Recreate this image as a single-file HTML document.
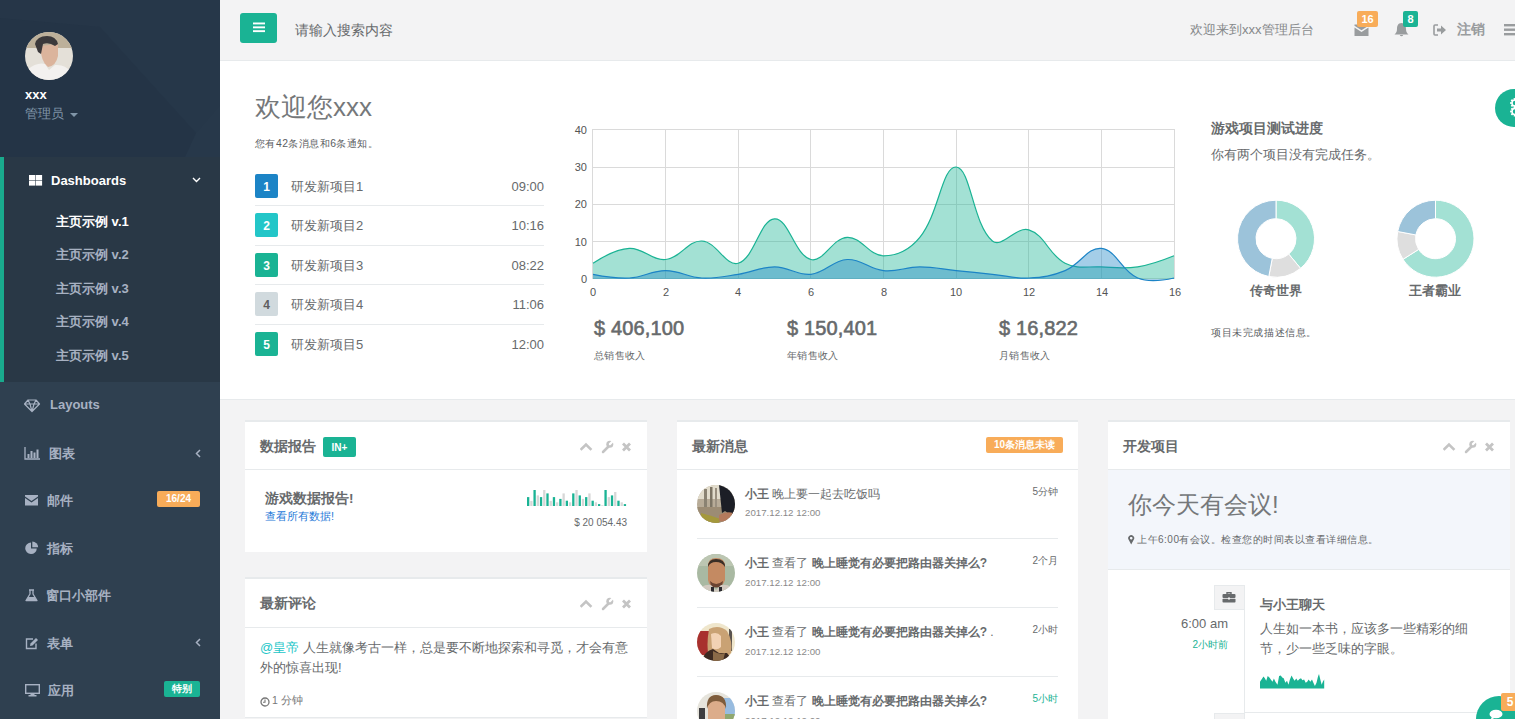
<!DOCTYPE html>
<html><head><meta charset="utf-8">
<style>
*{margin:0;padding:0;box-sizing:border-box}
html,body{width:1515px;height:719px;overflow:hidden}
body{position:relative;font-family:"Liberation Sans",sans-serif;font-size:13px;color:#676a6c;background:#f3f3f4}
.a{position:absolute;white-space:nowrap}
/* sidebar */
#side{position:absolute;left:0;top:0;width:220px;height:719px;background:#2f4050}
#prof{position:absolute;left:0;top:0;width:220px;height:157px;background:#263444;overflow:hidden}
#active{position:absolute;left:0;top:157px;width:220px;height:225px;background:#293846;border-left:4px solid #19aa8d}
.nav{color:#a7b1c2;font-weight:bold;font-size:13px}
.sub{color:#a7b1c2;font-weight:bold;font-size:13px}
/* top */
#top{position:absolute;left:220px;top:0;width:1295px;height:61px;background:#f3f3f4;border-bottom:1px solid #e7eaec}
#hdr{position:absolute;left:220px;top:61px;width:1295px;height:339px;background:#fff;border-bottom:1px solid #e7eaec}
.ibox{position:absolute;background:#fff;border-top:2px solid #e7eaec}
.ititle{position:absolute;left:0;top:0;right:0;height:48px;border-bottom:1px solid #e7eaec}
.ttl{font-size:14px;font-weight:bold;color:#676a6c}
.lbl{position:absolute;color:#fff;font-weight:bold;font-size:10px;border-radius:2px;text-align:center}
</style></head><body>
<div id="side">
  <div id="prof">
    <svg width="220" height="157" style="position:absolute;left:0;top:0">
      <rect width="220" height="157" fill="#243446"/>
      <polygon points="0,0 100,0 100,27 0,18" fill="#263648"/>
      <polygon points="100,0 220,0 220,133 196,133 100,27" fill="#263749"/>
      <polygon points="196,133 220,105 220,157 185,157" fill="#27384a"/>
    </svg>
    <svg class="a" style="left:25px;top:32px" width="48" height="48" viewBox="0 0 48 48">
      <defs><clipPath id="av"><circle cx="24" cy="24" r="24"/></clipPath></defs>
      <g clip-path="url(#av)">
        <rect width="48" height="48" fill="#e4e0d8"/>
        <rect width="48" height="16" fill="#bcb09a"/>
        <path d="M15,14 Q16,30 23,35 Q31,34 33,24 L33,12 Z" fill="#dbb49c"/>
        <path d="M10,12 Q12,4 22,4 Q31,4 33,12 L30,14 Q24,10 18,12 L16,22 L13,20 Z" fill="#3b393b"/>
        <path d="M0,48 L2,38 Q12,30 20,32 L24,38 L30,33 Q40,32 46,40 L48,48 Z" fill="#f3f1ef"/>
      </g>
    </svg>
    <div class="a" style="left:25px;top:87px;color:#fff;font-weight:bold;font-size:13px">xxx</div>
    <div class="a" style="left:25px;top:105px;color:#8095a8;font-size:13px">管理员 <span style="display:inline-block;width:0;height:0;border-left:4px solid transparent;border-right:4px solid transparent;border-top:4px solid #8095a8;vertical-align:middle;margin-left:2px"></span></div>
  </div>
  <div id="active"></div>
  <!-- dashboards -->
  <svg class="a" style="left:28.5px;top:174.5px" width="14" height="11"><rect x="0" y="0" width="6.3" height="5.1" fill="#fff"/><rect x="6.8" y="0" width="6.3" height="5.1" fill="#fff"/><rect x="0" y="5.6" width="6.3" height="5" fill="#fff"/><rect x="6.8" y="5.6" width="6.3" height="5" fill="#fff"/></svg>
  <div class="a nav" style="left:51px;top:173px;color:#fff">Dashboards</div>
  <svg class="a" style="left:192px;top:177px" width="9" height="6"><path d="M1,1 L4.5,4.5 L8,1" stroke="#fff" stroke-width="1.4" fill="none"/></svg>
  <div class="a sub" style="left:56px;top:213px;color:#fff">主页示例 v.1</div>
  <div class="a sub" style="left:56px;top:246px">主页示例 v.2</div>
  <div class="a sub" style="left:56px;top:280px">主页示例 v.3</div>
  <div class="a sub" style="left:56px;top:313px">主页示例 v.4</div>
  <div class="a sub" style="left:56px;top:347px">主页示例 v.5</div>
  <!-- other items -->

  <svg class="a" style="left:24px;top:399px" width="17" height="14"><path d="M4,1 H12 L15.5,5 L8,12.5 L0.5,5 Z M0.5,5 H15.5 M4,1 L6,5 L8,12.5 L10,5 L12,1" stroke="#a7b1c2" stroke-width="1.2" fill="none" stroke-linejoin="round"/></svg>
  <svg class="a" style="left:24px;top:447px" width="17" height="13"><path d="M1,0 V12 H16" stroke="#a7b1c2" stroke-width="1.3" fill="none"/><rect x="3.5" y="7" width="2" height="4" fill="#a7b1c2"/><rect x="6.5" y="4" width="2" height="7" fill="#a7b1c2"/><rect x="9.5" y="5.5" width="2" height="5.5" fill="#a7b1c2"/><rect x="12.5" y="2.5" width="2" height="8.5" fill="#a7b1c2"/></svg>
  <svg class="a" style="left:24px;top:494px" width="15" height="12"><path d="M1,1 H14 V2.5 L7.5,7 L1,2.5 Z" fill="#a7b1c2"/><path d="M1,4 L7.5,8.5 L14,4 V11.5 H1 Z" fill="#a7b1c2"/></svg>
  <svg class="a" style="left:25px;top:541px" width="14" height="14"><path d="M6,1.5 A5.8,5.8 0 1 0 11.8,7.5 H6 Z" fill="#a7b1c2"/><path d="M7.3,0.5 A6,6 0 0 1 13.2,6.3 H7.3 Z" fill="#a7b1c2"/></svg>
  <svg class="a" style="left:25px;top:589px" width="13" height="13"><path d="M4,1 H9 M5,1 V5 L1,11.5 H12 L8,5 V1" stroke="#a7b1c2" stroke-width="1.3" fill="none" stroke-linejoin="round"/><path d="M3.2,8 H9.8 L11.8,11.5 H1.2 Z" fill="#a7b1c2"/></svg>
  <svg class="a" style="left:25px;top:637px" width="14" height="13"><path d="M8,2 H1.5 V11.5 H11 V6.5" stroke="#a7b1c2" stroke-width="1.4" fill="none"/><path d="M5,9 L5.5,6.5 L11,1 L13,3 L7.5,8.5 Z" fill="#a7b1c2"/></svg>
  <svg class="a" style="left:25px;top:684px" width="15" height="13"><rect x="0.7" y="0.7" width="13.6" height="8.6" stroke="#a7b1c2" stroke-width="1.4" fill="none"/><rect x="0" y="0" width="15" height="9" fill="none"/><path d="M1.2,1.2 H13.8 V8.5 H1.2Z" fill="#a7b1c2" fill-opacity="0"/><rect x="5.5" y="9.5" width="4" height="2" fill="#a7b1c2"/><rect x="3.5" y="11" width="8" height="1.5" fill="#a7b1c2"/></svg>
  <svg class="a" style="left:194px;top:449px" width="8" height="9"><path d="M6,1 L2.5,4.5 L6,8" stroke="#a7b1c2" stroke-width="1.5" fill="none"/></svg>
  <svg class="a" style="left:194px;top:638px" width="8" height="9"><path d="M6,1 L2.5,4.5 L6,8" stroke="#a7b1c2" stroke-width="1.5" fill="none"/></svg>
  <div class="a nav" style="left:50px;top:397px">Layouts</div>
  <div class="a nav" style="left:49px;top:445px">图表</div>
  <div class="a nav" style="left:47px;top:492px">邮件</div>
  <div class="a nav" style="left:47px;top:540px">指标</div>
  <div class="a nav" style="left:46px;top:587px">窗口小部件</div>
  <div class="a nav" style="left:47px;top:635px">表单</div>
  <div class="a nav" style="left:48px;top:682px">应用</div>
  <div class="lbl" style="left:157px;top:491px;width:43px;height:16px;line-height:16px;background:#f8ac59">16/24</div>
  <div class="lbl" style="left:164px;top:681px;width:36px;height:16px;line-height:16px;background:#1ab394">特别</div>
</div>

<div id="top">
  <div class="a" style="left:20px;top:13px;width:37px;height:30px;background:#1ab394;border-radius:3px"></div>
  <svg class="a" style="left:33px;top:22px" width="12" height="11"><rect x="0" y="0.5" width="12" height="1.9" fill="#fff"/><rect x="0" y="4.4" width="12" height="1.9" fill="#fff"/><rect x="0" y="8.2" width="12" height="1.9" fill="#fff"/></svg>
  <div class="a" style="left:75px;top:22px;color:#676a6c;font-size:14px">请输入搜索内容</div>
  <div class="a" style="left:970px;top:21px;color:#85888a;font-size:13px">欢迎来到xxx管理后台</div>
  <svg class="a" style="left:1134px;top:24px" width="15" height="13"><path d="M0.5,3.5 L7.5,8 L14.5,3.5 V12 H0.5 Z" fill="#999c9e"/><path d="M0.5,0.5 H14.5 V1.8 L7.5,6.3 L0.5,1.8Z" fill="#999c9e"/></svg>
  <svg class="a" style="left:1174px;top:22px" width="15" height="15"><path d="M7.5,1 C4,1 3,4 3,7 C3,10 2,11 0.5,12.5 H14.5 C13,11 12,10 12,7 C12,4 11,1 7.5,1Z" fill="#999c9e"/><path d="M5.8,13 A1.8,1.8 0 0 0 9.2,13Z" fill="#999c9e"/></svg>
  <div class="lbl" style="left:1137px;top:11px;width:21px;height:16px;line-height:16px;font-size:11px;background:#f8ac59">16</div>
  <div class="lbl" style="left:1183px;top:11px;width:15px;height:16px;line-height:16px;font-size:11px;background:#1ab394">8</div>
  <svg class="a" style="left:1213px;top:24px" width="14" height="12"><path d="M5,1 H2 Q1,1 1,2 V10 Q1,11 2,11 H5" stroke="#999c9e" stroke-width="1.6" fill="none"/><path d="M4,4.5 H8 V1.5 L13,6 L8,10.5 V7.5 H4Z" fill="#999c9e"/></svg>
  <div class="a" style="left:1237px;top:21px;color:#999c9e;font-size:14px;font-weight:bold">注销</div>
  <svg class="a" style="left:1284px;top:24px" width="12" height="12"><rect x="0" y="0" width="12" height="2.4" fill="#999c9e"/><rect x="0" y="4.5" width="12" height="2.4" fill="#999c9e"/><rect x="0" y="9" width="12" height="2.4" fill="#999c9e"/></svg>
</div>

<div id="hdr"></div>
<div class="a" style="left:255px;top:92px;font-size:26px;line-height:30px;color:#75787a">欢迎您xxx</div>
<div class="a" style="left:255px;top:138px;font-size:10.4px;letter-spacing:0.45px;line-height:12px;color:#5a5d5f">您有42条消息和6条通知。</div>
<div class="a" style="left:255px;top:205px;width:289px;height:1px;background:#e7eaec"></div>
<div class="a" style="left:255px;top:245px;width:289px;height:1px;background:#e7eaec"></div>
<div class="a" style="left:255px;top:284px;width:289px;height:1px;background:#e7eaec"></div>
<div class="a" style="left:255px;top:324px;width:289px;height:1px;background:#e7eaec"></div>
<div class="lbl" style="left:255px;top:174px;width:23px;height:24px;line-height:26px;font-size:12px;background:#1c84c6">1</div>
<div class="lbl" style="left:255px;top:213px;width:23px;height:24px;line-height:26px;font-size:12px;background:#23c6c8">2</div>
<div class="lbl" style="left:255px;top:253px;width:23px;height:24px;line-height:26px;font-size:12px;background:#1ab394">3</div>
<div class="lbl" style="left:255px;top:292px;width:23px;height:24px;line-height:26px;font-size:12px;background:#d1dade;color:#5e5e5e">4</div>
<div class="lbl" style="left:255px;top:332px;width:23px;height:24px;line-height:26px;font-size:12px;background:#1ab394">5</div>
<div class="a" style="left:291px;top:179px;font-size:13px;line-height:16px">研发新项目1</div>
<div class="a" style="left:291px;top:218px;font-size:13px;line-height:16px">研发新项目2</div>
<div class="a" style="left:291px;top:258px;font-size:13px;line-height:16px">研发新项目3</div>
<div class="a" style="left:291px;top:297px;font-size:13px;line-height:16px">研发新项目4</div>
<div class="a" style="left:291px;top:337px;font-size:13px;line-height:16px">研发新项目5</div>
<div class="a" style="left:444px;width:100px;text-align:right;top:179px;font-size:13px;line-height:16px">09:00</div>
<div class="a" style="left:444px;width:100px;text-align:right;top:218px;font-size:13px;line-height:16px">10:16</div>
<div class="a" style="left:444px;width:100px;text-align:right;top:258px;font-size:13px;line-height:16px">08:22</div>
<div class="a" style="left:444px;width:100px;text-align:right;top:297px;font-size:13px;line-height:16px">11:06</div>
<div class="a" style="left:444px;width:100px;text-align:right;top:337px;font-size:13px;line-height:16px">12:00</div>
<!-- axis labels -->
<div class="a" style="left:537px;width:50px;text-align:right;top:124px;font-size:11px;line-height:13px;color:#545454">40</div>
<div class="a" style="left:537px;width:50px;text-align:right;top:161px;font-size:11px;line-height:13px;color:#545454">30</div>
<div class="a" style="left:537px;width:50px;text-align:right;top:198px;font-size:11px;line-height:13px;color:#545454">20</div>
<div class="a" style="left:537px;width:50px;text-align:right;top:236px;font-size:11px;line-height:13px;color:#545454">10</div>
<div class="a" style="left:537px;width:50px;text-align:right;top:273px;font-size:11px;line-height:13px;color:#545454">0</div>
<div class="a" style="left:568px;width:50px;text-align:center;top:286px;font-size:11px;line-height:13px;color:#545454">0</div>
<div class="a" style="left:641px;width:50px;text-align:center;top:286px;font-size:11px;line-height:13px;color:#545454">2</div>
<div class="a" style="left:713px;width:50px;text-align:center;top:286px;font-size:11px;line-height:13px;color:#545454">4</div>
<div class="a" style="left:786px;width:50px;text-align:center;top:286px;font-size:11px;line-height:13px;color:#545454">6</div>
<div class="a" style="left:859px;width:50px;text-align:center;top:286px;font-size:11px;line-height:13px;color:#545454">8</div>
<div class="a" style="left:931px;width:50px;text-align:center;top:286px;font-size:11px;line-height:13px;color:#545454">10</div>
<div class="a" style="left:1004px;width:50px;text-align:center;top:286px;font-size:11px;line-height:13px;color:#545454">12</div>
<div class="a" style="left:1077px;width:50px;text-align:center;top:286px;font-size:11px;line-height:13px;color:#545454">14</div>
<div class="a" style="left:1150px;width:50px;text-align:center;top:286px;font-size:11px;line-height:13px;color:#545454">16</div>
<!-- stats -->
<div class="a" style="left:594px;top:316px;font-size:20px;line-height:24px;-webkit-text-stroke:0.6px #676a6c;letter-spacing:0.15px;color:#676a6c">$ 406,100</div>
<div class="a" style="left:594px;top:350px;font-size:10px;letter-spacing:0.3px;line-height:12px">总销售收入</div>
<div class="a" style="left:787px;top:316px;font-size:20px;line-height:24px;-webkit-text-stroke:0.6px #676a6c;letter-spacing:0.15px;color:#676a6c">$ 150,401</div>
<div class="a" style="left:787px;top:350px;font-size:10px;letter-spacing:0.3px;line-height:12px">年销售收入</div>
<div class="a" style="left:999px;top:316px;font-size:20px;line-height:24px;-webkit-text-stroke:0.6px #676a6c;letter-spacing:0.15px;color:#676a6c">$ 16,822</div>
<div class="a" style="left:999px;top:350px;font-size:10px;letter-spacing:0.3px;line-height:12px">月销售收入</div>
<!-- right -->
<div class="a" style="left:1211px;top:120px;font-size:14px;line-height:17px;font-weight:bold">游戏项目测试进度</div>
<div class="a" style="left:1211px;top:147px;font-size:13px;line-height:16px">你有两个项目没有完成任务。</div>
<svg class="a" style="left:0;top:0" width="1515" height="400"><path d="M1276.00,200.20 A38.5,38.5 0 0 1 1300.54,268.36 L1288.75,254.11 A20,20 0 0 0 1276.00,218.70Z" fill="#a3e1d4" stroke="#fff" stroke-width="1"/><path d="M1300.54,268.36 A38.5,38.5 0 0 1 1268.79,276.52 L1272.25,258.35 A20,20 0 0 0 1288.75,254.11Z" fill="#dedede" stroke="#fff" stroke-width="1"/><path d="M1268.79,276.52 A38.5,38.5 0 0 1 1276.00,200.20 L1276.00,218.70 A20,20 0 0 0 1272.25,258.35Z" fill="#9cc3da" stroke="#fff" stroke-width="1"/><path d="M1435.50,200.20 A38.5,38.5 0 1 1 1402.99,259.33 L1418.61,249.42 A20,20 0 1 0 1435.50,218.70Z" fill="#a3e1d4" stroke="#fff" stroke-width="1"/><path d="M1402.99,259.33 A38.5,38.5 0 0 1 1397.68,231.49 L1415.85,234.95 A20,20 0 0 0 1418.61,249.42Z" fill="#dedede" stroke="#fff" stroke-width="1"/><path d="M1397.68,231.49 A38.5,38.5 0 0 1 1435.50,200.20 L1435.50,218.70 A20,20 0 0 0 1415.85,234.95Z" fill="#9cc3da" stroke="#fff" stroke-width="1"/></svg>
<div class="a" style="left:1226px;width:100px;text-align:center;top:283px;font-size:12.6px;line-height:16px;font-weight:bold">传奇世界</div>
<div class="a" style="left:1385px;width:100px;text-align:center;top:283px;font-size:12.6px;line-height:16px;font-weight:bold">王者霸业</div>
<div class="a" style="left:1211px;top:327px;font-size:10.4px;letter-spacing:0.6px;line-height:12px;color:#5a5d5f">项目未完成描述信息。</div>
<div class="a" style="left:1495px;top:89px;width:38px;height:38px;border-radius:50%;background:#1ab394"></div>
<svg class="a" style="left:1509px;top:98px" width="6" height="20"><circle cx="6" cy="5" r="3.8" fill="none" stroke="#fff" stroke-width="2.2" stroke-dasharray="1.6 1.1"/><circle cx="6" cy="5" r="3" fill="none" stroke="#fff" stroke-width="1.5"/><circle cx="6" cy="13.5" r="3.8" fill="none" stroke="#fff" stroke-width="2.2" stroke-dasharray="1.6 1.1"/><circle cx="6" cy="13.5" r="3" fill="none" stroke="#fff" stroke-width="1.5"/></svg>

<svg class="chart" width="1515" height="719" style="position:absolute;left:0;top:0">
<g stroke="#dadada" stroke-width="1" fill="none">
<path d="M592.5,167.5H1174.5M592.5,204.5H1174.5M592.5,241.5H1174.5"/>
<path d="M665.5,129.5V278.5M738.5,129.5V278.5M810.5,129.5V278.5M883.5,129.5V278.5M956.5,129.5V278.5M1028.5,129.5V278.5M1101.5,129.5V278.5"/>
<rect x="592.5" y="129.5" width="582" height="149"/>
</g>
<path d="M593.0,263.2 Q614.6,249.2 629.3,248.4 C643.6,247.7 651.6,260.9 665.6,259.5 C680.7,258.0 687.7,240.3 701.9,241.0 C716.8,241.8 725.9,267.0 738.2,263.2 C754.9,258.1 759.7,219.6 774.6,218.8 C788.7,218.1 794.6,255.3 810.9,259.5 C823.6,262.7 832.3,238.1 847.2,237.3 C861.4,236.6 869.0,255.8 883.5,255.8 C898.0,255.8 909.9,249.4 919.8,237.3 C939.0,213.9 941.9,166.3 956.1,167.0 C970.9,167.8 972.5,223.8 992.4,241.0 C1001.6,248.9 1016.1,226.0 1028.8,229.9 C1045.2,234.9 1048.4,254.7 1065.1,263.2 C1077.4,269.5 1086.8,266.2 1101.4,266.9 C1115.9,267.6 1123.5,269.1 1137.7,266.9 Q1152.5,264.6 1174.0,255.8 L1174,279 L593,279Z" fill="#1ab394" fill-opacity="0.4"/>
<path d="M593.0,263.2 Q614.6,249.2 629.3,248.4 C643.6,247.7 651.6,260.9 665.6,259.5 C680.7,258.0 687.7,240.3 701.9,241.0 C716.8,241.8 725.9,267.0 738.2,263.2 C754.9,258.1 759.7,219.6 774.6,218.8 C788.7,218.1 794.6,255.3 810.9,259.5 C823.6,262.7 832.3,238.1 847.2,237.3 C861.4,236.6 869.0,255.8 883.5,255.8 C898.0,255.8 909.9,249.4 919.8,237.3 C939.0,213.9 941.9,166.3 956.1,167.0 C970.9,167.8 972.5,223.8 992.4,241.0 C1001.6,248.9 1016.1,226.0 1028.8,229.9 C1045.2,234.9 1048.4,254.7 1065.1,263.2 C1077.4,269.5 1086.8,266.2 1101.4,266.9 C1115.9,267.6 1123.5,269.1 1137.7,266.9 Q1152.5,264.6 1174.0,255.8" fill="none" stroke="#1ab394" stroke-width="1.2"/>
<path d="M593.0,274.3 Q614.9,278.7 629.3,278.0 C643.9,277.3 651.1,270.6 665.6,270.6 C680.1,270.6 687.3,277.3 701.9,278.0 C716.4,278.7 723.8,276.5 738.2,274.3 C752.9,272.1 760.0,266.9 774.6,266.9 C789.1,266.9 796.8,275.7 810.9,274.3 C825.8,272.8 832.4,260.3 847.2,259.5 C861.5,258.8 868.7,269.1 883.5,270.6 C897.7,272.1 905.3,266.9 919.8,266.9 C934.3,266.9 941.6,269.1 956.1,270.6 C970.6,272.1 977.9,272.8 992.4,274.3 C1007.0,275.8 1014.3,278.7 1028.8,278.0 C1043.4,277.3 1051.5,276.1 1065.1,270.6 C1080.6,264.3 1087.5,247.0 1101.4,248.4 C1116.6,250.0 1121.3,271.3 1137.7,278.0 Q1150.4,283.2 1174.0,278.0 L1174,279 L593,279Z" fill="#1c84c6" fill-opacity="0.4"/>
<path d="M593.0,274.3 Q614.9,278.7 629.3,278.0 C643.9,277.3 651.1,270.6 665.6,270.6 C680.1,270.6 687.3,277.3 701.9,278.0 C716.4,278.7 723.8,276.5 738.2,274.3 C752.9,272.1 760.0,266.9 774.6,266.9 C789.1,266.9 796.8,275.7 810.9,274.3 C825.8,272.8 832.4,260.3 847.2,259.5 C861.5,258.8 868.7,269.1 883.5,270.6 C897.7,272.1 905.3,266.9 919.8,266.9 C934.3,266.9 941.6,269.1 956.1,270.6 C970.6,272.1 977.9,272.8 992.4,274.3 C1007.0,275.8 1014.3,278.7 1028.8,278.0 C1043.4,277.3 1051.5,276.1 1065.1,270.6 C1080.6,264.3 1087.5,247.0 1101.4,248.4 C1116.6,250.0 1121.3,271.3 1137.7,278.0 Q1150.4,283.2 1174.0,278.0" fill="none" stroke="#1c84c6" stroke-width="1.2"/>
</svg>

<!-- card 1 -->
<div class="ibox" style="left:245px;top:420px;width:402px;height:132px">
  <div class="ititle"></div>
  <div class="a ttl" style="left:15px;top:16px;line-height:16px">数据报告</div>
  <div class="lbl" style="left:78px;top:15px;width:33px;height:20px;line-height:21px;font-size:10px;background:#1ab394">IN+</div>
  <svg class="a" style="left:335px;top:16px" width="60" height="18"><path d="M1.5,11 L6,6.5 L10.5,11" stroke="#c4c4c4" stroke-width="2.6" fill="none" stroke-linecap="square"/><path d="M23,14 L28.5,8.5" stroke="#c4c4c4" stroke-width="2.5" stroke-linecap="round"/><circle cx="29.8" cy="6.2" r="3.5" fill="#c4c4c4"/><path d="M29.9,6.1 L33.5,2.5" stroke="#fff" stroke-width="2.2" stroke-linecap="round"/><path d="M43,5.5 L50,12.5 M50,5.5 L43,12.5" stroke="#c4c4c4" stroke-width="2.8"/></svg>
  <div class="a" style="left:20px;top:68px;font-size:13.5px;line-height:17px;font-weight:bold;color:#676a6c">游戏数据报告!</div>
  <div class="a" style="left:20px;top:88px;font-size:11px;line-height:13px;color:#1f7ad8">查看所有数据!</div>
  <svg class="a" style="left:282px;top:68px" width="102" height="17"><rect x="0.00" y="7.10" width="2.3" height="8.90" fill="#1ab394"/><rect x="3.23" y="10.90" width="2.3" height="5.10" fill="#d7d7d7"/><rect x="6.45" y="0.00" width="2.3" height="16.00" fill="#1ab394"/><rect x="9.68" y="5.40" width="2.3" height="10.60" fill="#d7d7d7"/><rect x="12.90" y="7.10" width="2.3" height="8.90" fill="#1ab394"/><rect x="16.13" y="0.00" width="2.3" height="16.00" fill="#d7d7d7"/><rect x="19.35" y="3.40" width="2.3" height="12.60" fill="#1ab394"/><rect x="22.58" y="10.90" width="2.3" height="5.10" fill="#d7d7d7"/><rect x="25.81" y="7.10" width="2.3" height="8.90" fill="#1ab394"/><rect x="29.03" y="12.30" width="2.3" height="3.70" fill="#d7d7d7"/><rect x="32.26" y="8.90" width="2.3" height="7.10" fill="#1ab394"/><rect x="35.48" y="3.40" width="2.3" height="12.60" fill="#d7d7d7"/><rect x="38.71" y="10.70" width="2.3" height="5.30" fill="#1ab394"/><rect x="41.94" y="12.30" width="2.3" height="3.70" fill="#d7d7d7"/><rect x="45.16" y="3.40" width="2.3" height="12.60" fill="#1ab394"/><rect x="48.39" y="0.00" width="2.3" height="16.00" fill="#d7d7d7"/><rect x="51.61" y="5.40" width="2.3" height="10.60" fill="#1ab394"/><rect x="54.84" y="8.90" width="2.3" height="7.10" fill="#d7d7d7"/><rect x="58.06" y="7.10" width="2.3" height="8.90" fill="#1ab394"/><rect x="61.29" y="3.40" width="2.3" height="12.60" fill="#d7d7d7"/><rect x="64.52" y="10.70" width="2.3" height="5.30" fill="#1ab394"/><rect x="67.74" y="12.30" width="2.3" height="3.70" fill="#d7d7d7"/><rect x="70.97" y="14.10" width="2.3" height="1.90" fill="#1ab394"/><rect x="74.19" y="15.30" width="2.3" height="0.70" fill="#d7d7d7"/><rect x="77.42" y="0.00" width="2.3" height="16.00" fill="#1ab394"/><rect x="80.65" y="7.10" width="2.3" height="8.90" fill="#d7d7d7"/><rect x="83.87" y="5.40" width="2.3" height="10.60" fill="#1ab394"/><rect x="87.10" y="2.00" width="2.3" height="14.00" fill="#d7d7d7"/><rect x="90.32" y="10.70" width="2.3" height="5.30" fill="#1ab394"/><rect x="93.55" y="12.30" width="2.3" height="3.70" fill="#d7d7d7"/><rect x="96.77" y="14.10" width="2.3" height="1.90" fill="#1ab394"/></svg>
  <div class="a" style="left:282px;width:100px;text-align:right;top:95px;font-size:10px;line-height:12px;color:#676a6c">$ 20 054.43</div>
</div>
<!-- card 2 -->
<div class="ibox" style="left:245px;top:577px;width:402px;height:141px;border-bottom:1px solid #e7eaec">
  <div class="ititle" style="height:49px"></div>
  <div class="a ttl" style="left:15px;top:16px;line-height:16px">最新评论</div>
  <svg class="a" style="left:335px;top:16px" width="60" height="18"><path d="M1.5,11 L6,6.5 L10.5,11" stroke="#c4c4c4" stroke-width="2.6" fill="none" stroke-linecap="square"/><path d="M23,14 L28.5,8.5" stroke="#c4c4c4" stroke-width="2.5" stroke-linecap="round"/><circle cx="29.8" cy="6.2" r="3.5" fill="#c4c4c4"/><path d="M29.9,6.1 L33.5,2.5" stroke="#fff" stroke-width="2.2" stroke-linecap="round"/><path d="M43,5.5 L50,12.5 M50,5.5 L43,12.5" stroke="#c4c4c4" stroke-width="2.8"/></svg>
  <div class="a" style="left:15px;top:59px;font-size:13px;line-height:20px;white-space:normal;width:372px;color:#676a6c"><span style="color:#23c6c8">@皇帝</span> 人生就像考古一样，总是要不断地探索和寻觅，才会有意外的惊喜出现!</div>
  <svg class="a" style="left:15px;top:118px" width="10" height="10"><circle cx="5" cy="5" r="4" fill="none" stroke="#777" stroke-width="1.3"/><path d="M5,2.5 V5.2 H3" stroke="#777" stroke-width="1.1" fill="none"/></svg><div class="a" style="left:27px;top:115px;font-size:10.5px;line-height:13px;color:#777">1 分钟</div>
</div>
<!-- card 3 -->
<div class="ibox" style="left:677px;top:420px;width:401px;height:320px">
  <div class="ititle"></div>
  <div class="a ttl" style="left:15px;top:16px;line-height:16px">最新消息</div>
  <div class="lbl" style="left:309px;top:15px;width:77px;height:16px;line-height:16px;font-size:10px;background:#f8ac59">10条消息未读</div>
  <div class="a" style="left:20px;top:62.8px;width:38px;height:38px;border-radius:50%;overflow:hidden;line-height:0"><svg width="38" height="38" viewBox="0 0 38 38"><rect width="38" height="38" fill="#b8ac98"/><rect width="38" height="14" fill="#e2dccc"/><rect x="7" y="4" width="3" height="20" fill="#8a8272"/><rect x="13" y="2" width="2.5" height="22" fill="#7c7464"/><rect x="18" y="3" width="2" height="20" fill="#9a9080"/><path d="M0,22 H38 V38 H0Z" fill="#9c8c74"/><path d="M22,0 H30 L38,8 V28 L34,30 L28,26 L25,28 Z" fill="#1c1e26"/><path d="M4,28 Q12,30 24,34 L22,38 H4Z" fill="#a4983c"/><path d="M22,30 Q30,26 36,28 L34,36 Q28,37 22,36Z" fill="#b47a5c"/></svg></div><div class="a" style="left:68px;top:64.8px;font-size:12px;line-height:15px;color:#676a6c"><b>小王</b> 晚上要一起去吃饭吗</div><div class="a" style="left:68px;top:85.3px;font-size:9.7px;line-height:12px;color:#8a8a8a">2017.12.12 12:00</div><div class="a" style="left:281px;width:100px;text-align:right;top:63.8px;font-size:10px;line-height:12px;color:#676a6c">5分钟</div><div class="a" style="left:20px;top:116px;width:361px;height:1px;background:#e7eaec"></div><div class="a" style="left:20px;top:132.0px;width:38px;height:38px;border-radius:50%;overflow:hidden;line-height:0"><svg width="38" height="38" viewBox="0 0 38 38"><rect width="38" height="38" fill="#a9b9a2"/><rect x="0" y="0" width="38" height="12" fill="#bcc6b2"/><path d="M11,12 Q11,4 19,4 Q28,4 28,12 L28,26 Q26,33 19,33 Q12,33 11,26Z" fill="#c48a62"/><path d="M11,13 Q11,5 19,5 Q28,5 28,13 Q25,8 19,8 Q13,8 11,13Z" fill="#3a2e26"/><path d="M13,27 Q19,33 26,27 L25,32 Q19,35 14,32Z" fill="#6a4432"/><path d="M0,38 L4,33 Q10,30 14,31 L19,36 L24,31 Q30,30 34,33 L38,38Z" fill="#d2cac0"/><rect x="14" y="33" width="3" height="5" fill="#2a2a30"/><rect x="22" y="33" width="3" height="5" fill="#2a2a30"/></svg></div><div class="a" style="left:68px;top:134.0px;font-size:12px;line-height:15px;color:#676a6c"><b>小王</b> 查看了 <b>晚上睡觉有必要把路由器关掉么?</b></div><div class="a" style="left:68px;top:154.5px;font-size:9.7px;line-height:12px;color:#8a8a8a">2017.12.12 12:00</div><div class="a" style="left:281px;width:100px;text-align:right;top:133.0px;font-size:10px;line-height:12px;color:#676a6c">2个月</div><div class="a" style="left:20px;top:185px;width:361px;height:1px;background:#e7eaec"></div><div class="a" style="left:20px;top:201.2px;width:38px;height:38px;border-radius:50%;overflow:hidden;line-height:0"><svg width="38" height="38" viewBox="0 0 38 38"><rect width="38" height="38" fill="#efe6cc"/><path d="M0,8 H13 V32 H0Z" fill="#a8302e"/><rect x="32" y="6" width="3" height="22" fill="#5a5450"/><path d="M12,6 Q22,1 30,8 Q36,18 34,30 L28,36 H12 Q9,22 12,6Z" fill="#c9a274"/><path d="M14,11 Q20,8 24,13 L24,24 Q20,28 15,25Z" fill="#f2d2b4"/><path d="M4,38 Q8,28 16,26 L22,30 L30,30 L36,38Z" fill="#3c2a22"/><path d="M16,28 Q22,32 28,30 L26,38 H16Z" fill="#8a6a48"/></svg></div><div class="a" style="left:68px;top:203.2px;font-size:12px;line-height:15px;color:#676a6c"><b>小王</b> 查看了 <b>晚上睡觉有必要把路由器关掉么?</b> .</div><div class="a" style="left:68px;top:223.7px;font-size:9.7px;line-height:12px;color:#8a8a8a">2017.12.12 12:00</div><div class="a" style="left:281px;width:100px;text-align:right;top:202.2px;font-size:10px;line-height:12px;color:#676a6c">2小时</div><div class="a" style="left:20px;top:254px;width:361px;height:1px;background:#e7eaec"></div><div class="a" style="left:20px;top:270.4px;width:38px;height:38px;border-radius:50%;overflow:hidden;line-height:0"><svg width="38" height="38" viewBox="0 0 38 38"><rect width="38" height="38" fill="#e6e4dc"/><rect x="2" y="16" width="6" height="16" fill="#3e3e40"/><path d="M27,6 H38 V24 H27Z" fill="#98bce0"/><path d="M27,22 H38 V30 H27Z" fill="#90a870"/><path d="M11,16 Q10,4 19,3 Q29,4 28,16 L28,28 Q24,36 19,36 Q13,36 11,28Z" fill="#dcac8a"/><path d="M10,17 Q9,3 19,3 Q30,3 29,17 Q27,9 19,9 Q12,9 10,17Z" fill="#7e5c3c"/><path d="M14,30 Q19,34 24,30 L23,36 H15Z" fill="#a87a5c"/></svg></div><div class="a" style="left:68px;top:272.4px;font-size:12px;line-height:15px;color:#676a6c"><b>小王</b> 查看了 <b>晚上睡觉有必要把路由器关掉么?</b></div><div class="a" style="left:68px;top:292.9px;font-size:9.7px;line-height:12px;color:#8a8a8a">2017.12.12 12:00</div><div class="a" style="left:281px;width:100px;text-align:right;top:271.4px;font-size:10px;line-height:12px;color:#1ab394">5小时</div>
</div>
<!-- card 4 -->
<div class="ibox" style="left:1108px;top:420px;width:402px;height:320px">
  <div class="ititle"></div>
  <div class="a ttl" style="left:15px;top:16px;line-height:16px">开发项目</div>
  <svg class="a" style="left:335px;top:16px" width="60" height="18"><path d="M1.5,11 L6,6.5 L10.5,11" stroke="#c4c4c4" stroke-width="2.6" fill="none" stroke-linecap="square"/><path d="M23,14 L28.5,8.5" stroke="#c4c4c4" stroke-width="2.5" stroke-linecap="round"/><circle cx="29.8" cy="6.2" r="3.5" fill="#c4c4c4"/><path d="M29.9,6.1 L33.5,2.5" stroke="#fff" stroke-width="2.2" stroke-linecap="round"/><path d="M43,5.5 L50,12.5 M50,5.5 L43,12.5" stroke="#c4c4c4" stroke-width="2.8"/></svg>
  <div class="a" style="left:0;top:48px;width:402px;height:100px;background:#f3f6fb;border-bottom:1px solid #e7eaec"></div>
  <div class="a" style="left:20px;top:67.5px;font-size:24px;line-height:30px;color:#75787a">你今天有会议!</div>
  <svg class="a" style="left:20px;top:113px" width="7" height="10"><path d="M3.2,9.5 L0.8,5 A3,3 0 1 1 5.6,5 Z M3.2,2 A1.2,1.2 0 1 0 3.21,2Z" fill="#676a6c" fill-rule="evenodd"/><circle cx="3.2" cy="3.2" r="1.1" fill="#f3f6fb"/></svg>
  <div class="a" style="left:29px;top:111px;font-size:10px;letter-spacing:0.5px;line-height:13px;color:#676a6c">上午6:00有会议。检查您的时间表以查看详细信息。</div>
  <div class="a" style="left:136px;top:187px;width:1px;height:104px;background:#e7eaec"></div>
  <div class="a" style="left:106px;top:163px;width:31px;height:25px;background:#f3f3f4;border:1px solid #e7eaec"></div>
  <svg class="a" style="left:114px;top:170px" width="14" height="11"><path d="M5,2 V0.8 H9 V2" stroke="#676a6c" stroke-width="1.4" fill="none"/><rect x="0.5" y="2" width="13" height="4" rx="1" fill="#676a6c"/><rect x="0.5" y="6.8" width="13" height="3.7" rx="0.8" fill="#676a6c"/><rect x="6" y="5.5" width="2" height="2" fill="#f3f3f4"/></svg>
  <div class="a" style="left:20px;width:100px;text-align:right;top:194px;font-size:13px;line-height:16px;color:#676a6c">6:00 am</div>
  <div class="a" style="left:20px;width:100px;text-align:right;top:217px;font-size:10px;line-height:12px;color:#1ab394">2小时前</div>
  <div class="a" style="left:152px;top:175px;font-size:13px;line-height:16px;font-weight:bold;color:#676a6c">与小王聊天</div>
  <div class="a" style="left:152px;top:197px;width:215px;white-space:normal;font-size:13px;line-height:20px;color:#676a6c">人生如一本书，应该多一些精彩的细节，少一些乏味的字眼。</div>
  <svg class="a" style="left:152px;top:252px" width="66" height="16"><polygon points="0.0,7.7 1.5,5.6 3.5,2.5 5.0,4.6 6.2,6.7 7.7,2.1 9.4,3.5 10.8,5.6 12.5,7.7 13.9,4.6 15.4,7.7 17.5,10.8 19.1,2.1 20.8,1.5 22.2,3.5 23.7,4.2 25.4,8.7 27.0,6.7 28.5,10.8 29.9,5.6 31.6,1.5 33.1,4.6 34.7,6.7 36.2,4.6 37.8,6.7 39.5,5.0 41.0,4.2 42.4,6.2 44.1,5.6 45.7,8.7 47.2,7.7 48.6,5.6 50.3,7.7 52.0,5.6 53.4,8.7 54.9,11.9 56.5,8.7 58.0,2.5 59.0,0.0 60.3,5.6 61.7,10.8 62.8,7.7 64.2,5.6 64.2,14.6 0.0,14.6" fill="#1ab394"/></svg>
  <div class="a" style="left:136px;top:290px;width:266px;height:1px;background:#e7eaec"></div>
  <div class="a" style="left:106px;top:291px;width:31px;height:25px;background:#f3f3f4;border:1px solid #e7eaec"></div>
  <svg class="a" style="left:114px;top:298px" width="14" height="11"><path d="M5,2 V0.8 H9 V2" stroke="#676a6c" stroke-width="1.4" fill="none"/><rect x="0.5" y="2" width="13" height="4" rx="1" fill="#676a6c"/></svg>
</div>
<div class="a" style="left:1476px;top:696px;width:46px;height:46px;border-radius:50%;background:#1ab394"></div>
<svg class="a" style="left:1489px;top:709px" width="20" height="12"><ellipse cx="7" cy="5" rx="6.5" ry="4.3" fill="#fff"/><path d="M3,7.5 L1.5,11 L6.5,8.5Z" fill="#fff"/></svg>
<div class="lbl" style="left:1501px;top:693px;width:20px;height:18px;line-height:18px;font-size:12px;background:#f8ac59;text-indent:-2px">5</div>
</body></html>
